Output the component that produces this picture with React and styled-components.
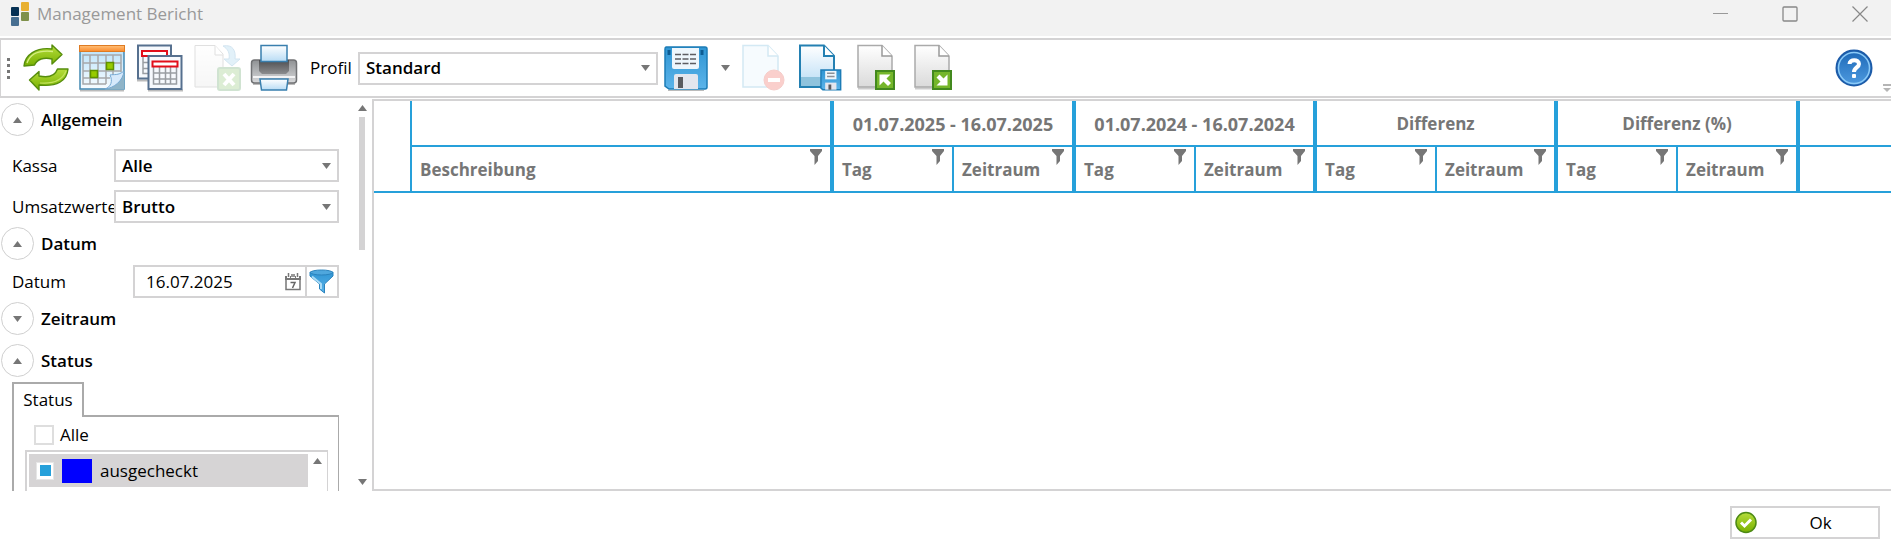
import { useState } from 'react'
import styled, { createGlobalStyle } from 'styled-components'

const line = '#d4d3d4'
const blue = '#26a0da'
const grey = '#767676'

const GlobalStyle = createGlobalStyle`
  * {
    box-sizing: border-box;
  }

  body {
    margin: 0;
    background: white;
    overflow: hidden;
  }

  body, button, input, select {
    font-family: 'Open Sans', 'Noto Sans', sans-serif;
    font-size: 17px;
    line-height: 24px;
    color: black;
  }

  button {
    padding: 0;
    border: none;
    background: none;
    cursor: pointer;
  }

  svg {
    display: block;
    flex: none;
  }
`

const Window = styled.div`
  height: 100vh;
  display: flex;
  flex-direction: column;
`

const TitleBar = styled.header`
  flex: none;
  display: flex;
  justify-content: space-between;
  height: 36px;
  margin-bottom: 2px;
  padding: 0 23px 8px 11px;
  background: #f2f2f2;
`

const Title = styled.h1`
  display: flex;
  align-items: center;
  gap: 7px;
  margin: 0;
  font-size: 17px;
  line-height: 24px;
  font-weight: 400;
  color: #999;
`

const WindowButtons = styled.div`
  display: flex;
  align-items: center;
  gap: 54px;
`

const Toolbar = styled.div`
  flex: none;
  display: flex;
  align-items: center;
  height: 60px;
  margin-bottom: 1px;
  padding-left: 6px;
  border: 2px solid ${line};
  border-left-width: 1px;
  border-right: none;
`

const Grip = styled.div`
  display: grid;
  gap: 3px;
  margin-right: 12px;
`

const GripDot = styled.i`
  width: 3px;
  height: 3px;
  background: #777;
`

const Tools = styled.div`
  display: flex;
  align-items: center;
  gap: ${props => props.$gap};
`

const Tool = styled.button`
  opacity: ${props => props.disabled ? '0.22' : '1'};
`

const ProfileLabel = styled.label`
  width: 60px;
  padding-left: 12px;
`

const ProfileSelect = styled.div`
  width: 300px;
  margin-right: 5px;
`

const DropTool = styled.button`
  margin: 0 12px;
`

const ToolbarEnd = styled.div`
  align-self: stretch;
  display: flex;
  align-items: center;
  gap: 10px;
  margin-left: auto;
`

const OverflowButton = styled.button`
  align-self: flex-end;
  padding-bottom: 4px;
`

const SelectBox = styled.div`
  display: grid;
  align-items: center;

  select, svg {
    grid-area: 1 / 1;
  }

  select {
    width: 100%;
    height: 33px;
    padding: 0 28px 0 6px;
    appearance: none;
    border: 2px solid ${line};
    border-radius: 0;
    background: white;
    font-weight: 600;
  }

  svg {
    justify-self: end;
    margin-right: 8px;
    pointer-events: none;
  }
`

const Workspace = styled.div`
  flex: 1;
  min-height: 0;
  display: flex;
`

const Sidebar = styled.aside`
  flex: none;
  display: flex;
  justify-content: space-between;
  width: 372px;
  overflow: hidden;
`

const Filters = styled.div`
  width: 339px;
  padding-top: 4px;
`

const SectionButton = styled.button`
  display: flex;
  align-items: center;
  gap: 7px;
  height: 33px;
  margin-left: 1px;
  margin-bottom: ${props => props.$space || '0'};
  font-weight: 600;
`

const Circle = styled.span`
  display: grid;
  place-items: center;
  width: 33px;
  height: 33px;
  border: 1px solid #cfcfcf;
  border-radius: 50%;
`

const Field = styled.div`
  display: grid;
  grid-template-columns: ${props => props.$label || '102px'} minmax(0, 1fr);
  align-items: center;
  padding-left: 12px;
  margin-bottom: ${props => props.$space};
`

const DateRow = styled.div`
  display: flex;
  height: 33px;
  border: 2px solid ${line};
`

const DateInput = styled.input`
  flex: 1;
  min-width: 0;
  padding: 0 0 0 11px;
  border: none;
  outline: none;
`

const DateButton = styled.button`
  padding: 0 4px;
`

const FilterButton = styled.button`
  padding: 0 3px 0 2px;
  border-left: 2px solid ${line};
`

const Tab = styled.button`
  position: relative;
  z-index: 1;
  display: block;
  width: 72px;
  height: 35px;
  margin: 5px 0 -2px 12px;
  padding-bottom: 2px;
  border: 2px solid #aaa;
  border-bottom: none;
  background: white;
`

const TabPanel = styled.div`
  height: 160px;
  margin-left: 12px;
  padding: 6px 10px 0 11px;
  border: 2px solid #aaa;
  border-right-width: 1px;
`

const CheckLabel = styled.label`
  display: flex;
  align-items: center;
  gap: 6px;
  height: 24px;
  margin: 0 0 3px 9px;
`

const Checkbox = styled.input`
  appearance: none;
  flex: none;
  width: ${props => props.$small ? '18px' : '20px'};
  height: ${props => props.$small ? '18px' : '20px'};
  margin: 0;
  border: ${props => props.$small ? '1px solid #e6e6e6' : '2px solid #dedede'};
  background: white;

  &:checked {
    background: linear-gradient(${blue}, ${blue}) center / 11px 11px no-repeat white;
  }
`

const List = styled.div`
  display: flex;
  justify-content: space-between;
  height: 110px;
  padding: 2px 5px 0 2px;
  border: 2px solid ${line};
  border-right-width: 1px;

  > svg {
    margin-top: 4px;
  }
`

const ListItem = styled.label`
  display: flex;
  align-items: center;
  width: 279px;
  height: 33px;
  padding-left: 7px;
  gap: 8px;
  background: #d6d4d5;
`

const Swatch = styled.span`
  width: 30px;
  height: 24px;
  background: ${props => props.$color};
`

const ScrollBar = styled.div`
  display: flex;
  flex-direction: column;
  align-items: center;
  width: 20px;
  padding: 6px 0;
`

const Thumb = styled.div`
  width: 6px;
  height: 133px;
  margin: 6px 0 auto;
  background: ${line};
`

const Report = styled.main`
  flex: 1;
  min-width: 0;
  overflow: hidden;
  border: 2px solid ${line};
  border-right: none;
`

const Table = styled.table`
  width: 100%;
  table-layout: fixed;
  border-collapse: separate;
  border-spacing: 0;
  color: ${grey};
`

const Th = styled.th`
  height: 46px;
  padding: 0;
  border: 0 solid ${blue};
  border-bottom-width: 2px;
  border-right-width: ${props => props.$edge || '0'};
  font-weight: 700;
`

const GroupTh = styled(Th)`
  padding-top: 2px;
  font-size: ${props => props.$period ? '18px' : '17px'};
`

const Column = styled.div`
  display: flex;
  justify-content: space-between;
  height: 44px;
  padding: 2px 8px 0 8px;
  line-height: 42px;
`

const Footer = styled.footer`
  flex: none;
  display: flex;
  justify-content: flex-end;
  height: 61px;
  padding: 15px 11px 0 0;
`

const OkButton = styled.button`
  display: flex;
  align-items: center;
  width: 150px;
  height: 33px;
  padding-left: 3px;
  border: 2px solid ${line};
`

const OkText = styled.span`
  flex: 1;
  padding-left: 6px;
`

const Arrow = ({ up }) => (
  <svg width='9' height='6' viewBox='0 0 9 6' aria-hidden='true'>
    <path d={up ? 'M4.5 0 9 6H0Z' : 'M0 0H9L4.5 6Z'} fill={grey} />
  </svg>
)

const Logo = () => (
  <svg width='19' height='25' viewBox='0 0 19 25'>
    <rect x='0' y='5' width='8' height='9' rx='1' fill='#063154' />
    <rect x='0' y='15' width='8' height='9' rx='1' fill='#476f91' />
    <rect x='10' y='0' width='8' height='9' rx='1' fill='#e8b030' />
    <rect x='10' y='10' width='8' height='9' rx='1' fill='#7f914b' />
  </svg>
)

const gradients = [
  ['green', '#b5dd3c', '#78b000'],
  ['orange', '#ffc078', '#fb8a2c'],
  ['sky', '#b9e2fb', '#f7fcff'],
  ['paper', '#ffffff', '#b8dcf5'],
  ['sheet', '#ffffff', '#dadada'],
  ['disk', '#2f95d3', '#5cb4ea'],
  ['dark', '#4e4e50', '#8b8c8e'],
  ['metal', '#8f9193', '#d9dadc'],
  ['help', '#1c68b7', '#4f9be0'],
]

const Gradients = () => (
  <svg width='0' height='0' aria-hidden='true'>
    <defs>
      {gradients.map(([id, from, to]) => (
        <linearGradient key={id} id={id} x1='0' y1='0' x2='0' y2='1'>
          <stop offset='0' stopColor={from} />
          <stop offset='1' stopColor={to} />
        </linearGradient>
      ))}
    </defs>
  </svg>
)

const RefreshIcon = () => (
  <svg width='48' height='48' viewBox='0 0 48 48'>
    <g fill='url(#green)' stroke='#568d0c' strokeWidth='1.4' strokeLinejoin='round'>
      <path d='M2 22C3 11 14 3 30 5V1L40 10.5 30 20V15C22 13 15 15 12.5 21Z' />
      <path d='M46 25C45 37 35 43 17 41V46L7.5 36 17 27.5V32C26 34 33 32 35.5 25Z' />
    </g>
    <path d='M5 19C8 10 17 6 31 7.5' fill='none' stroke='#d5ee83' strokeWidth='1.3' />
    <path d='M18 39C31 40 40 37 44 27' fill='none' stroke='#c4e45f' strokeWidth='1.2' />
  </svg>
)

const CalendarIcon = () => (
  <svg width='48' height='48' viewBox='0 0 48 48'>
    <path d='M1 46.5H45' stroke='#bbb' strokeWidth='2' />
    <rect x='1' y='3' width='44' height='42' fill='url(#sky)' stroke='#4389b3' strokeWidth='1.5' />
    <rect x='.5' y='1.5' width='45' height='6' fill='url(#orange)' stroke='#de7b23' />
    <path d='M4 11H42V19H4ZM4 19V40H27M4 27H42M4 34H31M11 11V40M19 11V40M27 11V40M34 11V32M42 18V28' fill='none' stroke='#a6a8ab' strokeWidth='1.5' />
    <rect x='27.5' y='18.5' width='7' height='7' fill='#97cb00' stroke='#5f9200' strokeWidth='1.5' />
    <rect x='11.5' y='26.5' width='7' height='7' fill='#97cb00' stroke='#5f9200' strokeWidth='1.5' />
    <path d='M45 26C43 37 34 44 25 45.5H45Z' fill='#8fb4c8' />
    <path d='M45 27C39 32 35 30 31 31C34 37 32 43 26 45C35 44 44 37 45 27Z' fill='#d6e9fb' stroke='#76a9d3' />
  </svg>
)

const TablePage = ({ x, y }) => (
  <g transform={`translate(${x} ${y})`}>
    <rect width='33' height='33' fill='#f6f9fd' stroke='#56708f' strokeWidth='2' />
    <path d='M5 11V28H28V11M11 11V28M17 11V28M22 11V28M5 17H28M5 23H28' fill='none' stroke='#999da2' strokeWidth='1.5' />
    <rect x='4' y='5.5' width='25' height='5' fill='#fff' stroke='#e20f1b' strokeWidth='2' />
  </g>
)

const TablesIcon = () => (
  <svg width='48' height='48' viewBox='0 0 48 48'>
    <path d='M1 36.5H12M12 46.5H47' stroke='#bbb' strokeWidth='2' />
    <TablePage x={2} y={1.5} />
    <TablePage x={12.5} y={12} />
  </svg>
)

const ExportIcon = () => (
  <svg width='48' height='48' viewBox='0 0 48 48'>
    <path d='M2 1.5H22L30 10V43H2Z' fill='url(#sheet)' stroke='#777' />
    <path d='M22 1.5V11H30' fill='#fff' stroke='#777' />
    <path d='M30 2C40 0 43 7 42 15H47L39 22 31 15H36C37 9 35 5 30 2Z' fill='#7ec2e8' stroke='#3b8bc0' />
    <rect x='25' y='24' width='22' height='22' rx='2' fill='#62b03f' stroke='#2f8431' strokeWidth='2' />
    <path d='M31 30 41 41M41 30 31 41' stroke='#fff' strokeWidth='4' />
  </svg>
)

const PrinterIcon = () => (
  <svg width='48' height='48' viewBox='0 0 48 48'>
    <path d='M3 40H45' stroke='#bbb' strokeWidth='2' />
    <rect x='1.5' y='16' width='45' height='23' rx='3' fill='url(#metal)' stroke='#717274' strokeWidth='1.5' />
    <path d='M3 33H45' stroke='#f3f3f4' strokeWidth='2' />
    <path d='M9 16H39V27L36 30H12L9 27Z' fill='url(#dark)' />
    <rect x='11' y='1.5' width='26' height='16' fill='url(#paper)' stroke='#397fae' strokeWidth='1.5' />
    <path d='M10 35H38L36.5 46H11.5Z' fill='url(#paper)' stroke='#397fae' strokeWidth='1.5' />
  </svg>
)

const Disk = () => (
  <>
    <path d='M3 2H42Q44 2 44 4V42Q44 44 42 44H6L2 41V4Q2 2 3 2Z' fill='url(#disk)' stroke='#1c7cb6' strokeWidth='1.5' />
    <path d='M6 5V10M39 5V10' stroke='#0d5c93' strokeWidth='3' />
    <path d='M9 3H36V22Q36 24 34 24H11Q9 24 9 22Z' fill='#eef6fc' />
    <path d='M12 9.5H33M12 14H33M12 18.500H33' stroke='#5d5d62' strokeWidth='1.5' strokeDasharray='6 1.5' />
    <path d='M11 44V31Q11 29 13 29H33Q35 29 35 31V44Z' fill='#e3e6ee' />
    <rect x='15' y='32' width='5' height='11' fill='#5a5b60' />
  </>
)

const DiskIcon = () => (
  <svg width='46' height='46' viewBox='0 0 46 46'>
    <path d='M5 45.5H41' stroke='#bbb' />
    <Disk />
  </svg>
)

const ProfileDeleteIcon = () => (
  <svg width='43' height='48' viewBox='0 0 43 48'>
    <path d='M1 1.5H26L36 12V43H1Z' fill='#d9effb' stroke='#3d9fd0' strokeWidth='1.5' />
    <path d='M26 1.5V12H36' fill='#fff' stroke='#3d9fd0' strokeWidth='1.5' />
    <circle cx='32' cy='36' r='10' fill='#ec2b1a' stroke='#d51d12' />
    <path d='M26 36H38' stroke='#fff' strokeWidth='4' />
  </svg>
)

const ProfileSaveIcon = () => (
  <svg width='43' height='48' viewBox='0 0 43 48'>
    <path d='M1 1.5H25L35 12V43H1Z' fill='url(#paper)' stroke='#2380b2' strokeWidth='2' />
    <path d='M2 33H34V42H2Z' fill='#8fc3dd' />
    <path d='M25 1.5V12H35' fill='#fff' stroke='#2380b2' strokeWidth='2' />
    <g transform='translate(21 25) scale(.47)'>
      <path d='M2 2H44V44H6L2 41Z' fill='url(#disk)' stroke='#1c7cb6' strokeWidth='3' />
      <path d='M11 4H35V22H11Z' fill='#eef6fc' />
      <path d='M15 9H31M15 16H31' stroke='#8c9096' strokeWidth='3' />
      <path d='M11 44V29H35V44Z' fill='#e3e6ee' />
      <rect x='18' y='33' width='6' height='11' fill='#5a5b60' />
    </g>
  </svg>
)

const SheetArrowIcon = ({ down }) => (
  <svg width='43' height='48' viewBox='0 0 43 48'>
    <path d='M2 44.5H20' stroke='#ccc' strokeWidth='2' />
    <path d='M2 1.5H26L36 12V43H2Z' fill='url(#sheet)' stroke='#aaa' strokeWidth='1.5' />
    <path d='M26 1.5V12H36' fill='#fff' stroke='#999' strokeWidth='1.5' />
    <rect x='20' y='27' width='18' height='18' fill='#75b62a' stroke='#43891e' strokeWidth='2' />
    <path
      d={down ? 'M34.5 30.5V41.5H23.5L27.5 37.5 23.5 33.5 26.5 30.5 30.5 34.5Z' : 'M23.5 30.5H34.5L30.5 34.5 35 39 32 42 27.5 37.5 23.5 41.5Z'}
      fill='#fff'
    />
  </svg>
)

const HelpIcon = () => (
  <svg width='38' height='38' viewBox='0 0 38 38'>
    <circle cx='19' cy='19' r='17.5' fill='url(#help)' stroke='#1c5ba8' strokeWidth='2' />
    <circle cx='19' cy='19' r='15.5' fill='none' stroke='#8bcaf7' strokeWidth='1.5' />
    <path d='M14.5 15C14.5 10 24 10 24 15C24 18.5 19 18.5 19 23' fill='none' stroke='#fff' strokeWidth='4' />
    <rect x='17' y='25' width='4' height='4' rx='1' fill='#fff' />
  </svg>
)

const CalendarSmallIcon = () => (
  <svg width='16' height='19' viewBox='0 0 16 19'>
    <path d='M1 6.5V17.5H15V6.5' fill='none' stroke='#777' strokeWidth='1.5' />
    <path d='M0 4H2V6H5V4H6V6H10V4H11V6H14V4H16V8H0Z' fill='#777' />
    <path d='M3.5 1V5M12.5 1V5M7 2V5M9 2V5' stroke='#777' strokeWidth='1.5' />
    <path d='M5.5 10.5H10L7.5 16' fill='none' stroke='#666' strokeWidth='1.5' />
  </svg>
)

const FunnelIcon = () => (
  <svg width='25' height='25' viewBox='0 0 25 25'>
    <path d='M1 3H24V7L15.5 15V24L10.5 20V15L1 7Z' fill='url(#disk)' stroke='#2b83bd' />
    <ellipse cx='12.5' cy='3.5' rx='11' ry='2.5' fill='#4fa7dd' stroke='#2b83bd' />
    <path d='M3 7.5 12 15V20' fill='none' stroke='#a9dbf6' strokeWidth='2' />
  </svg>
)

const ColumnFilter = () => (
  <svg width='12' height='16' viewBox='0 0 12 16' aria-hidden='true'>
    <path d='M0 0H12V2L8 7V12L4.5 16V7L0 2Z' fill={grey} />
  </svg>
)

const OkIcon = () => (
  <svg width='22' height='23' viewBox='0 0 22 23'>
    <circle cx='11' cy='11.5' r='10' fill='url(#green)' stroke='#4d8a15' strokeWidth='1.5' />
    <path d='M6 11.5 9.5 15 16 8.5' fill='none' stroke='#fff' strokeWidth='3' />
  </svg>
)

const groups = [
  { title: '01.07.2025 - 16.07.2025', widths: [120, 122], period: true },
  { title: '01.07.2024 - 16.07.2024', widths: [120, 121], period: true },
  { title: 'Differenz', widths: [120, 121] },
  { title: 'Differenz (%)', widths: [120, 122] },
]

const Select = ({ id, value }) => (
  <SelectBox>
    <select id={id} defaultValue={value}>
      <option>{value}</option>
    </select>
    <Arrow />
  </SelectBox>
)

const Section = ({ title, open, onToggle, space }) => (
  <SectionButton onClick={onToggle} aria-expanded={open} $space={space}>
    <Circle><Arrow up={open} /></Circle>
    {title}
  </SectionButton>
)

const App = () => {
  const [open, setOpen] = useState({ general: true, date: true, period: false, status: true })
  const [date, setDate] = useState('16.07.2025')

  const toggle = (key) => {
    setOpen({ ...open, [key]: !open[key] })
  }

  return (
    <Window>
      <GlobalStyle />
      <Gradients />
      <TitleBar>
        <Title><Logo />Management Bericht</Title>
        <WindowButtons>
          <button aria-label='Minimieren'>
            <svg width='16' height='16' viewBox='0 0 16 16'><path d='M1 7.5H16' stroke='#999' /></svg>
          </button>
          <button aria-label='Maximieren'>
            <svg width='16' height='16' viewBox='0 0 16 16'><rect x='1' y='1' width='14' height='14' rx='1' fill='none' stroke='#888' strokeWidth='1.3' /></svg>
          </button>
          <button aria-label='Schließen'>
            <svg width='16' height='16' viewBox='0 0 16 16'><path d='M.5.5 15.5 15.5M15.5.5.5 15.5' stroke='#888' strokeWidth='1.2' /></svg>
          </button>
        </WindowButtons>
      </TitleBar>

      <Toolbar>
        <Grip>{[...Array(4)].map((e, i) => <GripDot key={i} />)}</Grip>
        <Tools $gap='9px'>
          <Tool aria-label='Aktualisieren'><RefreshIcon /></Tool>
          <Tool aria-label='Kalender'><CalendarIcon /></Tool>
          <Tool aria-label='Tabellen'><TablesIcon /></Tool>
          <Tool aria-label='Excel Export' disabled><ExportIcon /></Tool>
          <Tool aria-label='Drucken'><PrinterIcon /></Tool>
        </Tools>
        <ProfileLabel htmlFor='profile'>Profil</ProfileLabel>
        <ProfileSelect><Select id='profile' value='Standard' /></ProfileSelect>
        <Tool aria-label='Speichern'><DiskIcon /></Tool>
        <DropTool aria-label='Speicheroptionen'><Arrow /></DropTool>
        <Tools $gap='14px'>
          <Tool aria-label='Profil löschen' disabled><ProfileDeleteIcon /></Tool>
          <Tool aria-label='Profil speichern'><ProfileSaveIcon /></Tool>
          <Tool aria-label='Profil importieren'><SheetArrowIcon /></Tool>
          <Tool aria-label='Profil exportieren'><SheetArrowIcon down /></Tool>
        </Tools>
        <ToolbarEnd>
          <Tool aria-label='Hilfe'><HelpIcon /></Tool>
          <OverflowButton aria-label='Weitere'>
            <svg width='8' height='8' viewBox='0 0 8 8'><path d='M0 0H8V2H0ZM0 4H8L4 8Z' fill='#b5b5b5' /></svg>
          </OverflowButton>
        </ToolbarEnd>
      </Toolbar>

      <Workspace>
        <Sidebar>
          <Filters>
            <Section title='Allgemein' open={open.general} onToggle={() => toggle('general')} space='13px' />
            {open.general && (
              <>
                <Field $space='8px'>
                  <label htmlFor='kassa'>Kassa</label>
                  <Select id='kassa' value='Alle' />
                </Field>
                <Field $space='4px'>
                  <label htmlFor='values'>Umsatzwerte</label>
                  <Select id='values' value='Brutto' />
                </Field>
              </>
            )}
            <Section title='Datum' open={open.date} onToggle={() => toggle('date')} space='5px' />
            {open.date && (
              <Field $label='121px' $space='4px'>
                <label htmlFor='date'>Datum</label>
                <DateRow>
                  <DateInput id='date' value={date} onChange={e => setDate(e.target.value)} />
                  <DateButton aria-label='Datum wählen'><CalendarSmallIcon /></DateButton>
                  <FilterButton aria-label='Filter'><FunnelIcon /></FilterButton>
                </DateRow>
              </Field>
            )}
            <Section title='Zeitraum' open={open.period} onToggle={() => toggle('period')} space='9px' />
            <Section title='Status' open={open.status} onToggle={() => toggle('status')} />
            {open.status && (
              <>
                <Tab>Status</Tab>
                <TabPanel>
                  <CheckLabel><Checkbox type='checkbox' />Alle</CheckLabel>
                  <List>
                    <ListItem>
                      <Checkbox type='checkbox' defaultChecked $small />
                      <Swatch $color='#0000ff' />
                      ausgecheckt
                    </ListItem>
                    <Arrow up />
                  </List>
                </TabPanel>
              </>
            )}
          </Filters>
          <ScrollBar>
            <Arrow up />
            <Thumb />
            <Arrow />
          </ScrollBar>
        </Sidebar>

        <Report>
          <Table>
            <colgroup>
              <col width='38' />
              <col width='422' />
              {groups.map(({ title, widths }) => widths.map((w, i) => <col key={title + i} width={w} />))}
              <col />
            </colgroup>
            <thead>
              <tr>
                <Th rowSpan={2} $edge='2px' />
                <Th $edge='4px' />
                {groups.map(({ title, period }) => (
                  <GroupTh key={title} colSpan={2} $edge='4px' $period={period}>{title}</GroupTh>
                ))}
                <Th />
              </tr>
              <tr>
                <Th $edge='4px'><Column>Beschreibung<ColumnFilter /></Column></Th>
                {groups.map(({ title }) => ['Tag', 'Zeitraum'].map((name, i) => (
                  <Th key={title + name} $edge={i === 0 ? '2px' : '4px'}>
                    <Column>{name}<ColumnFilter /></Column>
                  </Th>
                )))}
                <Th />
              </tr>
            </thead>
          </Table>
        </Report>
      </Workspace>

      <Footer>
        <OkButton><OkIcon /><OkText>Ok</OkText></OkButton>
      </Footer>
    </Window>
  )
}

export default App
